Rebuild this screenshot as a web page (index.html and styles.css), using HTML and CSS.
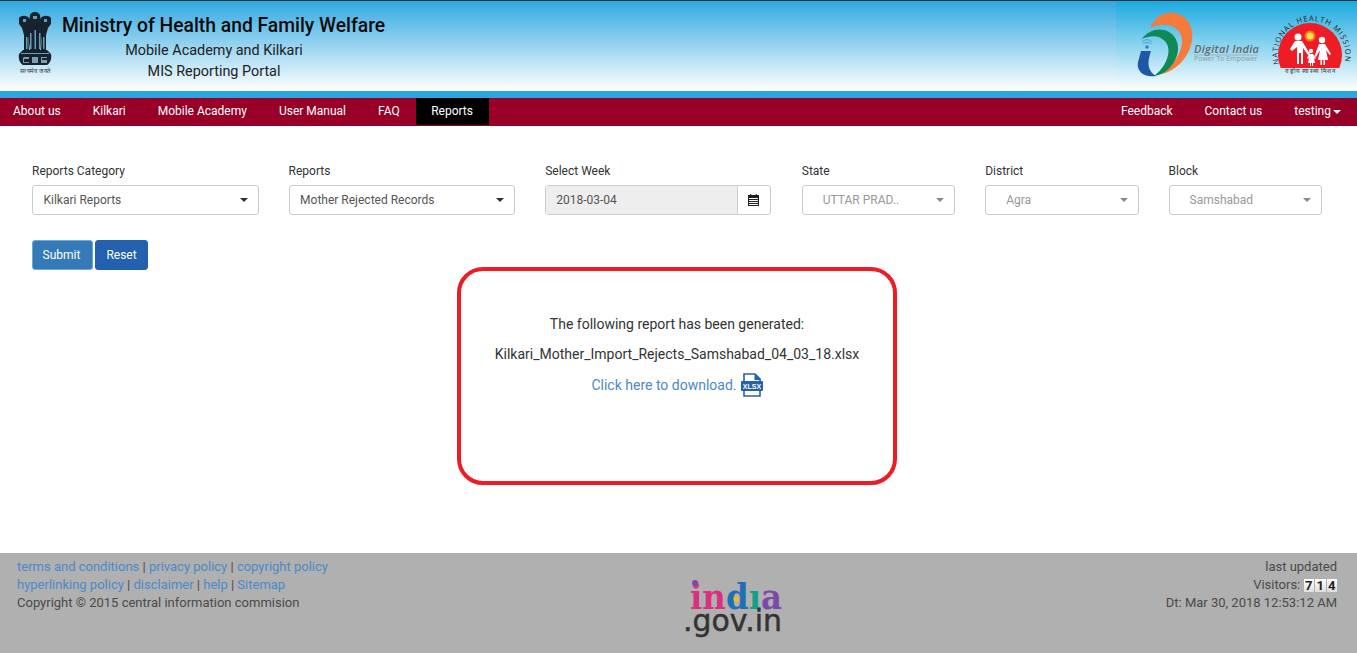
FILE: index.html
```html
<!DOCTYPE html>
<html>
<head>
  <meta charset="UTF-8">
  <link rel="stylesheet" href="styles.css">
  <title>MIS Reporting Portal</title>
</head>
<body>
  <header class="site-header">
    <div class="brand">
      <svg class="emblem" width="36" height="68" viewBox="17 11 36 68">
        <filter id="soft"><feGaussianBlur stdDeviation=".45"/></filter>
        <g filter="url(#soft)">
          <g fill="#16242e">
            <path d="M30 16c0-3 3-4 5-4s5 1 5 4l1 4-2 3h-8l-2-3z"/>
            <path d="M19 18c2-3 8-3 10 0l2 5-1 5-1 7h-5l-2-7-3-4z"/>
            <path d="M51 18c-2-3-8-3-10 0l-2 5 1 5 1 7h5l2-7 3-4z"/>
            <path d="M29 22h12l1 14-2 14H30l-2-14z"/>
            <path d="M24 34h4l1 16h-5zM42 34h4v16h-5z"/>
            <path d="M23 50h24l4 4c1 5-1 9-4 11H23c-3-2-5-6-4-11z"/>
          </g>
          <g fill="#6d9cb8">
            <path d="M23 19h3v3h-3zM44 19h3v3h-3zM33 16h4v3h-4z"/>
            <path d="M26 37h1.500v12H26zM30 33h1.500v16H30zM34.500 30h1.500v19h-1.500zM39 33h1.500v16H39zM43 37h1.500v12H43z"/>
            <path d="M21 53h28v1H21z"/>
          </g>
          <g fill="#7d9fb2">
            <path d="M24 57h5v2h-5v3h5v1h-6v-5zM32 57h6v6h-6zM41 57h6v1h-5v2h5v3h-6z"/>
          </g>
        </g>
        <text class="emblem-motto" x="35" y="73" text-anchor="middle" textLength="30">सत्यमेव जयते</text>
      </svg>
      <div class="brand-text">
        <h1 class="brand-title">Ministry of Health and Family Welfare</h1>
        <p class="brand-sub">Mobile Academy and Kilkari</p>
        <p class="brand-sub">MIS Reporting Portal</p>
      </div>
    </div>
    <div class="partner-logos">
      <svg width="241" height="90" viewBox="1116 1 241 90">
        <path fill="#f47b3a" d="M1150 28C1155 17 1165 11 1175 13 1190 16 1196 32 1190 48 1185 62 1172 73 1157 75 1171 68 1181 56 1182 42 1183 28 1168 20 1150 28z"/>
        <path fill="#0f8a57" d="M1142 39C1148 30 1160 27 1169 32 1179 38 1181 51 1174 62 1169 70 1162 75 1154 76 1162 70 1168 61 1168.500 51 1169 39 1156 32 1142 39z"/>
        <path fill="#2058a6" d="M1141 51H1151C1148 60 1146 70 1156 76 1144 78 1136 71 1138 62z"/>
        <circle cx="1147" cy="47" r="1.800" fill="#2f7fc4"/>
        <path fill="none" stroke="#4c9ad4" stroke-width="1" d="M1143 44c2-2 6-2 8 0M1142 42c3-3 7-3 10 0"/>
        <text class="digital-name" x="1194" y="53" textLength="65">Digital India</text>
        <path stroke="#999" stroke-width=".6" d="M1194 55h64"/>
        <text class="digital-tag" x="1194" y="61">Power To Empower</text>

        <clipPath id="dome"><rect x="1270" y="15" width="80" height="53"/></clipPath>
        <circle cx="1310" cy="55" r="32" fill="#ee1c25" clip-path="url(#dome)"/>
        <circle cx="1310" cy="36" r="5.500" fill="#ffc21a" opacity=".5"/>
        <circle cx="1310" cy="36" r="3.500" fill="#ffe34d"/>
        <g fill="#fff">
          <circle cx="1298" cy="37" r="3.500"/>
          <path d="M1290 49l5-8h7l8 13-2 1-5-7v16h-2V53h-2v11h-2V47l-5 4z"/>
          <circle cx="1322" cy="40" r="3.200"/>
          <path d="M1319 44h6l6 10-1.500 1-3.500-5 2 10h-3v5h-1.500v-5h-1.500v5h-1.500v-5h-2.500l2-10-4 7-1.500-1z"/>
          <circle cx="1311" cy="51" r="2.200"/>
          <path d="M1309 54h4l3 4-1 1-1-1 1 5h-2v3h-1v-3h-1v3h-1v-3h-2l1-5-1 1-1-1z"/>
        </g>
        <path id="nhm-arc" fill="none" d="M1279 64A33.800 33.800 0 1 1 1344 64"/>
        <text class="nhm-name"><textPath href="#nhm-arc" textLength="122">NATIONAL HEALTH MISSION</textPath></text>
        <text class="nhm-hindi" x="1310" y="73" text-anchor="middle" textLength="50">राष्ट्रीय स्वास्थ्य मिशन</text>
      </svg>
    </div>
  </header>

  <nav class="main-nav">
    <ul class="nav-list">
      <li><a class="nav-link first" href="#">About us</a></li>
      <li><a class="nav-link" href="#">Kilkari</a></li>
      <li><a class="nav-link" href="#">Mobile Academy</a></li>
      <li><a class="nav-link" href="#">User Manual</a></li>
      <li><a class="nav-link" href="#">FAQ</a></li>
      <li><a class="nav-link active" href="#">Reports</a></li>
    </ul>
    <ul class="nav-list">
      <li><a class="nav-link" href="#">Feedback</a></li>
      <li><a class="nav-link" href="#">Contact us</a></li>
      <li><a class="nav-link" href="#">testing<span class="nav-caret"></span></a></li>
    </ul>
  </nav>

  <main class="content">
    <div class="filters">
      <div class="field wide">
        <label class="field-label">Reports Category</label>
        <div class="select"><span>Kilkari Reports</span><i class="caret"></i></div>
      </div>
      <div class="field wide">
        <label class="field-label">Reports</label>
        <div class="select"><span>Mother Rejected Records</span><i class="caret"></i></div>
      </div>
      <div class="field wide">
        <label class="field-label">Select Week</label>
        <div class="date-group">
          <div class="date-input">2018-03-04</div>
          <div class="date-addon">
            <svg width="11" height="12" viewBox="0 0 10 12" preserveAspectRatio="none">
              <path fill="#222" d="M2 0h1v1h4V0h1v1h2v11H0V1h2zM1 4v1h8V4zm0 2v1h8V6zm0 2v1h8V8zm0 2v1h8v-1z"/>
            </svg>
          </div>
        </div>
      </div>
      <div class="field narrow">
        <label class="field-label">State</label>
        <div class="select disabled"><span>UTTAR PRAD..</span><i class="caret"></i></div>
      </div>
      <div class="field narrow">
        <label class="field-label">District</label>
        <div class="select disabled"><span>Agra</span><i class="caret"></i></div>
      </div>
      <div class="field narrow">
        <label class="field-label">Block</label>
        <div class="select disabled"><span>Samshabad</span><i class="caret"></i></div>
      </div>
    </div>

    <div class="actions">
      <button class="btn btn-focus">Submit</button>
      <button class="btn">Reset</button>
    </div>

    <section class="report-box">
      <p class="report-line">The following report has been generated:</p>
      <p class="report-line">Kilkari_Mother_Import_Rejects_Samshabad_04_03_18.xlsx</p>
      <p class="report-line download">
        <a href="#">Click here to download.</a>
        <svg class="xlsx-icon" width="22" height="24" viewBox="0 0 22 24">
          <path fill="none" stroke="#2361ae" stroke-width="1.600" d="M3 9V1h11l5 5v3M3 18v5h16v-5"/>
          <path fill="#2361ae" d="M13.500 1h1l5 5v1h-6z"/>
          <rect x="0" y="8" width="22" height="10" rx="1" fill="#2361ae"/>
          <text class="xlsx-label" x="11" y="16" text-anchor="middle">XLSX</text>
        </svg>
      </p>
    </section>
  </main>

  <footer class="site-footer">
    <div class="footer-left">
      <div><a href="#">terms and conditions</a> | <a href="#">privacy policy</a> | <a href="#">copyright policy</a></div>
      <div><a href="#">hyperlinking policy</a> | <a href="#">disclaimer</a> | <a href="#">help</a> | <a href="#">Sitemap</a></div>
      <div>Copyright © 2015 central information commision</div>
    </div>
    <svg class="india-logo" width="100" height="64" viewBox="0 0 100 64">
      <text class="india-word" y="33" x="7" textLength="92" lengthAdjust="spacingAndGlyphs"><tspan fill="#d8327e">in</tspan><tspan fill="#1f6fb5">d</tspan><tspan fill="#14a085">ı</tspan><tspan fill="#7b4aa8">a</tspan></text>
      <circle cx="12" cy="7" r="3" fill="#7b4aa8"/>
      <circle cx="53" cy="23" r="2.500" fill="#f5c400"/>
      <text class="gov-word" y="55" x="0" textLength="99" lengthAdjust="spacingAndGlyphs">.gov.in</text>
    </svg>
    <div class="footer-right">
      <div>last updated</div>
      <div class="visitors">Visitors: <span class="counter"><b>7</b><b>1</b><b>4</b></span></div>
      <div>Dt: Mar 30, 2018 12:53:12 AM</div>
    </div>
  </footer>
</body>
</html>
```

FILE: styles.css
```css
* {
  box-sizing: border-box;
}

html, body {
  margin: 0;
  height: 653px;
  overflow: hidden;
}

body {
  display: flex;
  flex-direction: column;
  background: #fff;
  color: #333;
  font-family: Roboto, "Liberation Sans", sans-serif;
  font-size: 14px;
}

a {
  color: inherit;
  text-decoration: none;
}

/* header */
.site-header {
  display: flex;
  justify-content: space-between;
  height: 98px;
  border-top: 1px solid #333;
  border-bottom: 7px solid #29a7df;
  background: linear-gradient(#31a9e1, #fff);
}

.brand {
  display: flex;
  padding-left: 17px;
}

.emblem {
  margin-top: 10px;
}

.emblem-motto {
  font-size: 6px;
  fill: #333;
}

.brand-text {
  margin-left: 9px;
}

.brand-title {
  margin: 12px 0 0;
  font-size: 19.300px;
  line-height: 26px;
  font-weight: 500;
  color: #0a0a0a;
}

.brand-sub {
  width: 178px;
  margin: 0 0 0 63px;
  text-align: center;
  font-size: 14.400px;
  line-height: 21px;
  color: #222;
}

.brand-title + .brand-sub {
  margin-top: 1px;
}

.partner-logos {
  width: 241px;
  background: linear-gradient(#1ba9e0, #fff);
}

.partner-logos svg {
  display: block;
}

.digital-name {
  font: italic 600 11px "Open Sans", sans-serif;
  fill: #666;
}

.digital-tag {
  font: 7px "Open Sans", sans-serif;
  fill: #999;
}

.nhm-name {
  font: 7.500px "Open Sans", sans-serif;
  fill: #222;
}

.nhm-hindi {
  font-size: 6px;
  fill: #333;
}

/* nav */
.main-nav {
  display: flex;
  justify-content: space-between;
  height: 28px;
  background: #990027;
}

.nav-list {
  display: flex;
  margin: 0;
  padding: 0;
  list-style: none;
}

.nav-link {
  display: block;
  padding: 0 16px;
  line-height: 26px;
  height: 28px;
  font-size: 12px;
  color: #fff;
}

.nav-link.first {
  padding-left: 13px;
}

.nav-link.active {
  height: 27px;
  padding: 0 16px 0 15.500px;
  background: #000;
}

.nav-caret {
  display: inline-block;
  margin-left: 2px;
  vertical-align: middle;
  border-top: 4px solid #fff;
  border-left: 4px solid transparent;
  border-right: 4px solid transparent;
}

/* filter form */
.content {
  flex: 1;
  padding: 36px 0 0 32px;
}

.filters {
  display: flex;
  gap: 30px;
}

.field.wide {
  width: 226.600px;
}

.field.narrow {
  width: 153.400px;
}

.field-label {
  display: block;
  margin-bottom: 5px;
  font-size: 12px;
  line-height: 18px;
  color: #333;
}

.select {
  display: flex;
  align-items: center;
  justify-content: space-between;
  height: 30px;
  padding: 0 10px 0 10.500px;
  border: 1px solid #ccc;
  border-radius: 3px;
  background: #fff;
  font-size: 12px;
  color: #555;
}

.caret {
  border-top: 4px solid #333;
  border-left: 4px solid transparent;
  border-right: 4px solid transparent;
}

.select.disabled {
  padding-left: 20px;
  color: #999;
}

.select.disabled .caret {
  border-top-color: #888;
}

.date-group {
  display: flex;
  height: 30px;
  margin-right: 1px;
  border: 1px solid #ccc;
  border-radius: 3px;
  font-size: 12px;
}

.date-input {
  flex: 1;
  padding-left: 10px;
  line-height: 28px;
  background: #eee;
  color: #555;
}

.date-addon {
  display: flex;
  align-items: center;
  justify-content: center;
  width: 33px;
  border-left: 1px solid #ccc;
}

.actions {
  display: flex;
  gap: 2px;
  margin-top: 25px;
}

.btn {
  width: 53px;
  height: 30px;
  padding: 0;
  border: 1px solid #2361ae;
  border-radius: 3px;
  background: #2361ae;
  color: #fff;
  font: 400 12px Roboto, sans-serif;
}

.btn-focus {
  width: 61px;
  padding-right: 2px;
  background: #337ab7;
  border-color: #6fa8dc;
}

/* report panel */
.report-box {
  width: 440px;
  height: 218px;
  margin: -3px 0 0 425px;
  padding-top: 43px;
  border: 4px solid #ed1c24;
  border-radius: 26px;
  text-align: center;
}

.report-line {
  margin: 0 0 10px;
  line-height: 20px;
  color: #333;
}

.download {
  display: flex;
  justify-content: center;
  align-items: center;
  gap: 4px;
  height: 22px;
}

.download a {
  color: #4a8ac8;
}

.xlsx-label {
  font: 700 7px "Liberation Sans", sans-serif;
  fill: #fff;
}

/* footer */
.site-footer {
  display: flex;
  height: 100px;
  padding: 5px 20px 0 17px;
  background: #b0b0b0;
  font-size: 13px;
  line-height: 18px;
  color: #4a4a4a;
}

.footer-left {
  width: 665px;
}

.footer-left a {
  color: #4a8ac8;
}

.india-logo {
  margin-top: 18px;
  margin-left: 1px;
}

.india-word {
  font: 700 36px "DejaVu Serif", serif;
}

.gov-word {
  font: 400 30px "DejaVu Sans", sans-serif;
  fill: #333;
  stroke: #333;
  stroke-width: .5px;
}

.footer-right {
  margin-left: auto;
  text-align: right;
}

.counter {
  display: inline-flex;
  vertical-align: top;
  margin-top: 3px;
  gap: 1px;
}

.counter b {
  width: 10.500px;
  height: 13px;
  background: linear-gradient(#fff, #ddd);
  color: #222;
  font-size: 13px;
  line-height: 13px;
  text-align: center;
}
```
